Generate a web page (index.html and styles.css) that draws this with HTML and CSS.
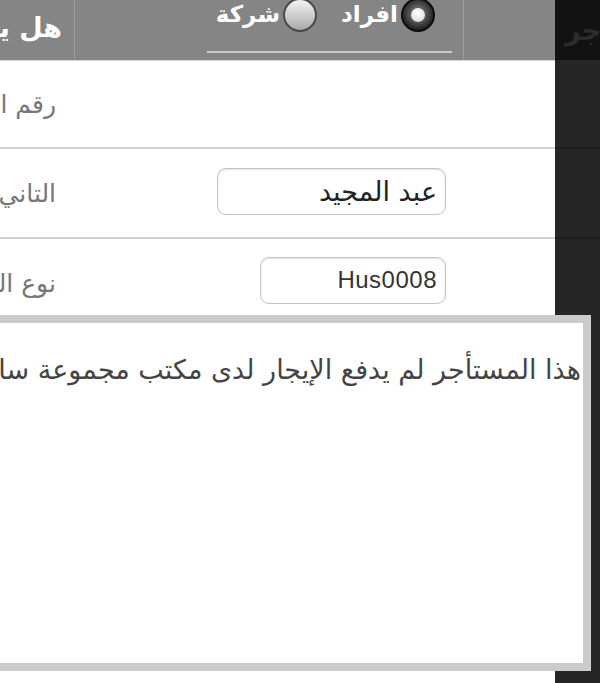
FILE: index.html
```html
<!DOCTYPE html>
<html lang="ar" dir="rtl">
<head>
<meta charset="utf-8">
<title>نموذج المستأجر</title>
<link rel="stylesheet" href="styles.css">
</head>
<body>
<div class="page">
  <aside class="side">
    <div class="side-head"><span>المستأجر</span></div>
    <div class="side-row side-r1"></div>
    <div class="side-row side-r2"></div>
    <div class="side-row side-r3"></div>
  </aside>
  <main class="main">
    <div class="head">
      <div class="hcell hcell-empty"></div>
      <div class="hcell hcell-radio">
        <div class="fieldset">
          <div class="opts">
            <label class="opt"><span class="radio on"></span><span class="opt-text">افراد</span></label>
            <label class="opt"><span class="radio"></span><span class="opt-text">شركة</span></label>
          </div>
        </div>
      </div>
      <div class="hcell hcell-title">هل يوجد كفيل؟</div>
    </div>
    <div class="row row-1">
      <div class="field"></div>
      <div class="label">رقم الهوية</div>
    </div>
    <div class="row row-2">
      <div class="field"><input class="input input-name" type="text" value="عبد المجيد"></div>
      <div class="label">التاني</div>
    </div>
    <div class="row row-3">
      <div class="field"><input class="input input-code" type="text" value="Hus0008"></div>
      <div class="label">نوع العقار</div>
    </div>
  </main>
</div>
<div class="popup">
  <p class="popup-text">هذا المستأجر لم يدفع الإيجار لدى مكتب مجموعة سامر العقارية</p>
</div>
</body>
</html>
```

FILE: styles.css
```css
html, body {
  margin: 0;
  padding: 0;
}
body {
  width: 600px;
  height: 683px;
  overflow: hidden;
  direction: rtl;
  background: #fff;
  position: relative;
  font-family: "DejaVu Sans", "Noto Sans Arabic", sans-serif;
}
.page {
  display: flex;
  width: 600px;
  height: 683px;
}
.side {
  flex: 0 0 45px;
  background: #262626;
  overflow: hidden;
  display: flex;
  flex-direction: column;
}
.side-head {
  height: 60px;
  flex: none;
  background: #121212;
  display: flex;
  justify-content: flex-end;
  align-items: center;
  padding-left: 10px;
}
.side-head span {
  white-space: nowrap;
  color: #2c2c2c;
  font-weight: bold;
  font-size: 27px;
}
.side-row {
  flex: none;
  border-bottom: 2px solid #1c1c1c;
}
.side-r1 { height: 87px; }
.side-r2 { height: 88px; }
.side-r3 { flex: 1; border-bottom: none; }

.main {
  flex: 0 0 655px;
  display: flex;
  flex-direction: column;
}
.head {
  height: 61px;
  box-sizing: border-box;
  background: #858585;
  border-bottom: 1px solid #d6d6d6;
  display: flex;
  flex: none;
}
.hcell {
  box-sizing: border-box;
  height: 60px;
}
.hcell-empty {
  width: 92px;
  border-left: 1px solid #9c9c9c;
}
.hcell-radio {
  width: 389px;
  border-left: 1px solid #9c9c9c;
}
.hcell-title {
  flex: 1;
  padding-right: 12px;
  color: #fff;
  font-weight: bold;
  font-size: 27px;
  line-height: 56px;
  white-space: nowrap;
}
.fieldset {
  margin-right: 11px;
  width: 245px;
  height: 55px;
  box-sizing: border-box;
  border-bottom: 2px solid #c9c9c9;
}
.opts {
  display: flex;
  gap: 24px;
  padding-right: 17px;
  margin-top: -2px;
}
.opt {
  display: flex;
  align-items: flex-start;
  gap: 3px;
}
.radio {
  width: 34px;
  height: 34px;
  box-sizing: border-box;
  border-radius: 50%;
  border: 2px solid #4a4a4a;
  background: linear-gradient(#f4f4f4, #a9a9a9);
  position: relative;
  flex: none;
}
.radio.on {
  border: 2px solid #0e0e0e;
  background: radial-gradient(circle at 50% 45%, #8a8a8a 0, #4a4a4a 45%, #1e1e1e 75%);
}
.radio.on::after {
  content: "";
  position: absolute;
  left: 50%;
  top: 50%;
  width: 14px;
  height: 14px;
  margin: -7px 0 0 -7px;
  border-radius: 50%;
  background: radial-gradient(circle at 50% 35%, #ffffff 0, #e6e6e6 60%, #bdbdbd 100%);
}
.opt-text {
  color: #fff;
  font-weight: bold;
  font-size: 23px;
  line-height: 30px;
  padding-top: 1px;
  white-space: nowrap;
}

.row {
  display: flex;
  align-items: center;
  border-bottom: 2px solid #d0d0d0;
  flex: none;
}
.row-1 { height: 86px; }
.row-2 { height: 88px; }
.row-3 { height: 88px; border-bottom: none; }
.field {
  width: 481px;
  box-sizing: border-box;
  padding-right: 109px;
  display: flex;
}
.label {
  flex: 1;
  padding-right: 18px;
  white-space: nowrap;
  color: #777;
  font-size: 25px;
}
.input {
  height: 47px;
  box-sizing: border-box;
  border: 1px solid #c4c4c4;
  border-radius: 9px;
  box-shadow: inset 0 1px 2px rgba(0, 0, 0, 0.12);
  background: #fff;
  padding: 0 8px 0 4px;
  margin: 0;
  direction: rtl;
  text-align: right;
  outline: none;
}
.input-name {
  width: 229px;
  margin-top: -4px;
  font-family: "DejaVu Sans", "Noto Sans Arabic", sans-serif;
  font-size: 27px;
  color: #222;
}
.input-code {
  width: 186px;
  margin-top: -6px;
  font-family: "Liberation Sans", Arial, sans-serif;
  font-size: 24px;
  letter-spacing: 0.5px;
  color: #333;
}

.popup {
  position: absolute;
  top: 315px;
  right: 9px;
  width: 760px;
  height: 356px;
  box-sizing: border-box;
  border: 8px solid #cbcbcb;
  background: #fff;
  overflow: hidden;
}
.popup-text {
  margin: 0;
  padding: 32px 2px 0 0;
  font-size: 27px;
  line-height: 30px;
  color: #444;
  white-space: nowrap;
}
```
